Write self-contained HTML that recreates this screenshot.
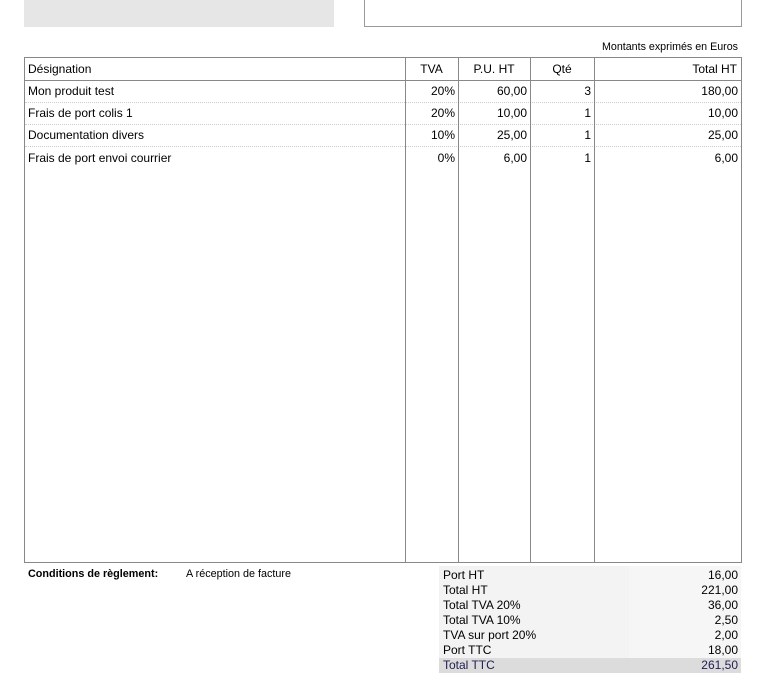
<!DOCTYPE html>
<html><head><meta charset="utf-8"><style>
*{margin:0;padding:0;box-sizing:border-box}
body{width:762px;height:689px;background:#fff;font-family:"Liberation Sans",Arial,sans-serif;color:#000;position:relative;overflow:hidden}
.a{position:absolute}
.t{font-size:12px;line-height:14px;white-space:nowrap}
.r{text-align:right}
.row{position:absolute;left:25px;width:716px;border-bottom:1px dotted #ccc}
.vl{position:absolute;top:57px;height:506px;width:1px;background:#888}
</style></head><body>
<div class="a" style="left:24px;top:0;width:310px;height:27px;background:#e6e6e6"></div>
<div class="a" style="left:364px;top:-2px;width:378px;height:29px;border:1px solid #999"></div>
<div class="a" style="left:500px;top:41px;width:238px;font-size:10.7px;text-align:right">Montants exprimés en Euros</div>
<div class="a" style="left:24px;top:57px;width:718px;height:506px;border:1px solid #888"></div>
<div class="a" style="left:25px;top:80px;width:716px;height:1px;background:#888"></div>
<div class="row" style="top:102px;height:1px"></div>
<div class="row" style="top:124px;height:1px"></div>
<div class="row" style="top:146px;height:1px"></div>
<div class="vl" style="left:405px"></div>
<div class="vl" style="left:458px"></div>
<div class="vl" style="left:530px"></div>
<div class="vl" style="left:594px"></div>

<div class="a t" style="left:28px;top:62px">Désignation</div>
<div class="a t" style="left:405px;width:53px;top:62px;text-align:center">TVA</div>
<div class="a t" style="left:458px;width:72px;top:62px;text-align:center">P.U. HT</div>
<div class="a t" style="left:530px;width:64px;top:62px;text-align:center">Qté</div>
<div class="a t r" style="left:594px;width:143px;top:62px">Total HT</div>

<div class="a t" style="left:28px;top:84px">Mon produit test</div>
<div class="a t r" style="left:405px;width:50px;top:84px">20%</div>
<div class="a t r" style="left:458px;width:69px;top:84px">60,00</div>
<div class="a t r" style="left:530px;width:61px;top:84px">3</div>
<div class="a t r" style="left:594px;width:144px;top:84px">180,00</div>

<div class="a t" style="left:28px;top:106px">Frais de port colis 1</div>
<div class="a t r" style="left:405px;width:50px;top:106px">20%</div>
<div class="a t r" style="left:458px;width:69px;top:106px">10,00</div>
<div class="a t r" style="left:530px;width:61px;top:106px">1</div>
<div class="a t r" style="left:594px;width:144px;top:106px">10,00</div>

<div class="a t" style="left:28px;top:128px">Documentation divers</div>
<div class="a t r" style="left:405px;width:50px;top:128px">10%</div>
<div class="a t r" style="left:458px;width:69px;top:128px">25,00</div>
<div class="a t r" style="left:530px;width:61px;top:128px">1</div>
<div class="a t r" style="left:594px;width:144px;top:128px">25,00</div>

<div class="a t" style="left:28px;top:151px">Frais de port envoi courrier</div>
<div class="a t r" style="left:405px;width:50px;top:151px">0%</div>
<div class="a t r" style="left:458px;width:69px;top:151px">6,00</div>
<div class="a t r" style="left:530px;width:61px;top:151px">1</div>
<div class="a t r" style="left:594px;width:144px;top:151px">6,00</div>

<div class="a" style="left:28px;top:568px;font-size:10.8px;font-weight:bold">Conditions de règlement:</div>
<div class="a" style="left:186px;top:568px;font-size:10.8px">A réception de facture</div>

<div class="a" style="left:439px;top:566px;width:190px;height:107px;background:#f3f3f3"></div>
<div class="a" style="left:629px;top:566px;width:112px;height:107px;background:#f6f6f6"></div>
<div class="a" style="left:439px;top:658px;width:302px;height:15px;background:#dcdcdc"></div>
<div class="a t" style="left:443px;top:568px;line-height:15px">Port HT<br>Total HT<br>Total TVA 20%<br>Total TVA 10%<br>TVA sur port 20%<br>Port TTC<br><span style="color:#1e1e50">Total TTC</span></div>
<div class="a t r" style="left:629px;width:109px;top:568px;line-height:15px">16,00<br>221,00<br>36,00<br>2,50<br>2,00<br>18,00<br><span style="color:#1e1e50">261,50</span></div>
</body></html>
